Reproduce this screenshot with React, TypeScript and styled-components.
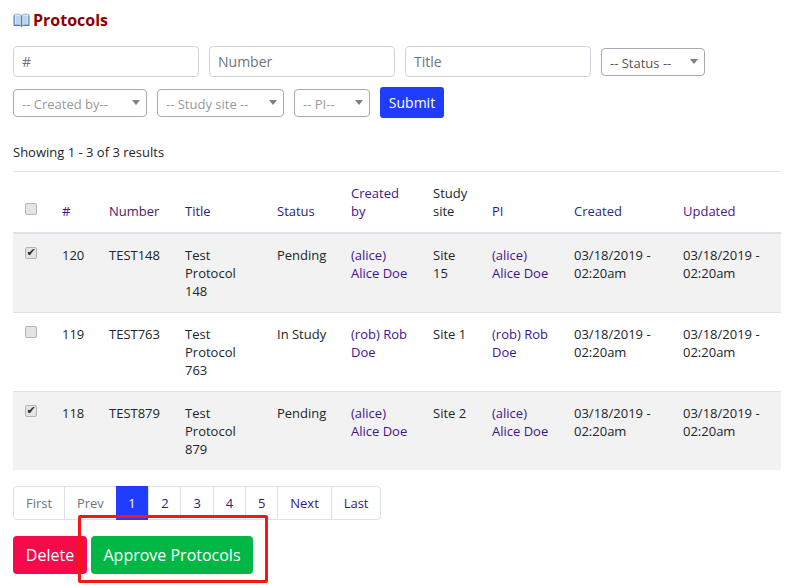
import styled, { createGlobalStyle } from 'styled-components';

const GlobalStyle = createGlobalStyle`
  html, body {
    margin: 0;
    padding: 0;
    background: #ffffff;
  }
  body {
    font-family: 'Open Sans', 'Liberation Sans', sans-serif;
    font-size: 13px;
    line-height: 18px;
    color: #212529;
  }
`;

const protocols = [
  { id: 120, number: 'TEST148', title: 'Test Protocol 148', status: 'Pending', by: '(alice) Alice Doe', site: 'Site 15', pi: '(alice) Alice Doe', checked: true },
  { id: 119, number: 'TEST763', title: 'Test Protocol 763', status: 'In Study', by: '(rob) Rob Doe', site: 'Site 1', pi: '(rob) Rob Doe', checked: false },
  { id: 118, number: 'TEST879', title: 'Test Protocol 879', status: 'Pending', by: '(alice) Alice Doe', site: 'Site 2', pi: '(alice) Alice Doe', checked: true },
];

const columns = [37, 47, 76, 92, 74, 82, 59, 82, 109, 110];

function BookIcon() {
  return (
    <svg width="17" height="15" viewBox="0 0 17 15">
      <path d="M0.5 2.5 L0.5 13 L7.5 13 L8.5 14.5 L9.5 13 L16.5 13 L16.5 2.5 Z" fill="#3f7fc4" />
      <path d="M1.5 1.5 C4 0.8 6.5 1 8 2 L8 12.5 C6.5 11.6 4 11.5 1.5 12 Z" fill="#dbe9f6" stroke="#5b93cf" strokeWidth="0.6" />
      <path d="M15.5 1.5 C13 0.8 10.5 1 9 2 L9 12.5 C10.5 11.6 13 11.5 15.5 12 Z" fill="#dbe9f6" stroke="#5b93cf" strokeWidth="0.6" />
      <path d="M3 4 L6.8 4 M3 6 L6.8 6 M3 8 L6.8 8 M3 10 L6.8 10 M10.2 4 L14 4 M10.2 6 L14 6 M10.2 8 L14 8 M10.2 10 L14 10" stroke="#8fb4da" strokeWidth="0.8" />
    </svg>
  );
}

function App() {
  return (
    <Page>
      <GlobalStyle />
      <Heading>
        <BookIcon />
        Protocols
      </Heading>

      <FilterRow>
        <TextInput placeholder="#" />
        <TextInput placeholder="Number" />
        <TextInput placeholder="Title" />
        <SelectBox $width={104} $dark>-- Status --</SelectBox>
      </FilterRow>
      <FilterRow $second>
        <SelectBox $width={134}>-- Created by--</SelectBox>
        <SelectBox $width={127}>-- Study site --</SelectBox>
        <SelectBox $width={76}>-- PI--</SelectBox>
        <SubmitButton>Submit</SubmitButton>
      </FilterRow>

      <ResultCount>Showing 1 - 3 of 3 results</ResultCount>

      <Table>
        <colgroup>
          {columns.map((width, i) => (
            <col key={i} style={{ width }} />
          ))}
        </colgroup>
        <thead>
          <tr>
            <HeadCell><Check /></HeadCell>
            <HeadCell $color="#42148c">#</HeadCell>
            <HeadCell $color="#521470">Number</HeadCell>
            <HeadCell $color="#32168a">Title</HeadCell>
            <HeadCell $color="#32168a">Status</HeadCell>
            <HeadCell $color="#42148c">Created by</HeadCell>
            <HeadCell>Study site</HeadCell>
            <HeadCell $color="#32168e">PI</HeadCell>
            <HeadCell $color="#2a2a8e">Created</HeadCell>
            <HeadCell $color="#521488">Updated</HeadCell>
          </tr>
        </thead>
        <tbody>
          {protocols.map((p) => (
            <Row key={p.id}>
              <Cell><Check defaultChecked={p.checked} /></Cell>
              <Cell>{p.id}</Cell>
              <Cell>{p.number}</Cell>
              <Cell>{p.title}</Cell>
              <Cell>{p.status}</Cell>
              <Cell $link>{p.by}</Cell>
              <Cell>{p.site}</Cell>
              <Cell $link>{p.pi}</Cell>
              <Cell>03/18/2019 - 02:20am</Cell>
              <Cell>03/18/2019 - 02:20am</Cell>
            </Row>
          ))}
        </tbody>
      </Table>

      <Pagination>
        <PageItem $disabled>First</PageItem>
        <PageItem $disabled>Prev</PageItem>
        <PageItem $active>1</PageItem>
        <PageItem>2</PageItem>
        <PageItem>3</PageItem>
        <PageItem>4</PageItem>
        <PageItem>5</PageItem>
        <PageItem>Next</PageItem>
        <PageItem>Last</PageItem>
      </Pagination>

      <Actions>
        <ActionButton $bg="#f70a4a" $width={74}>Delete</ActionButton>
        <ActionButton $bg="#00b746" $width={162}>Approve Protocols</ActionButton>
        <Highlight />
      </Actions>
    </Page>
  );
}

export default App;

const Page = styled.div`
  width: 768px;
  height: 586px;
  padding: 10px 9px 0 13px;
  overflow: hidden;
`;

const Heading = styled.h1`
  display: flex;
  align-items: center;
  gap: 3px;
  margin: 0 0 16px;
  font-size: 16px;
  line-height: 20px;
  font-weight: 700;
  color: #8b0000;
`;

const FilterRow = styled.div<{ $second?: boolean }>`
  display: flex;
  align-items: center;
  gap: 10px;
  margin-top: ${(p) => (p.$second ? '10px' : '0')};
`;

const TextInput = styled.input`
  box-sizing: border-box;
  width: 186px;
  height: 31px;
  padding: 0 8px;
  border: 1px solid #ced4da;
  border-radius: 4px;
  font-family: inherit;
  font-size: 14px;
  color: #495057;
  &::placeholder {
    color: #6c757d;
    opacity: 1;
  }
`;

const SelectBox = styled.div<{ $width: number; $dark?: boolean }>`
  position: relative;
  box-sizing: border-box;
  width: ${(p) => p.$width}px;
  height: 28px;
  padding: 0 8px;
  border: 1px solid #a9a9a9;
  border-radius: 4px;
  font-size: 13px;
  line-height: 28px;
  color: ${(p) => (p.$dark ? '#555555' : '#999999')};
  &::after {
    content: '';
    position: absolute;
    right: 6px;
    top: 10px;
    border-left: 4px solid transparent;
    border-right: 4px solid transparent;
    border-top: 5px solid #808080;
  }
`;

const SubmitButton = styled.button`
  width: 64px;
  height: 31px;
  padding: 0;
  border: 0;
  border-radius: 3px;
  background: #1f3cff;
  color: #ffffff;
  font-family: inherit;
  font-size: 14px;
`;

const ResultCount = styled.div`
  margin-top: 25px;
`;

const Table = styled.table`
  width: 768px;
  margin-top: 10px;
  border-collapse: collapse;
  table-layout: fixed;
`;

const HeadCell = styled.th<{ $color?: string }>`
  padding: 12px;
  border-top: 1px solid #dee2e6;
  border-bottom: 2px solid #dee2e6;
  font-weight: 400;
  text-align: left;
  vertical-align: bottom;
  color: ${(p) => p.$color ?? '#212529'};
`;

const Row = styled.tr`
  &:nth-child(odd) {
    background: #f2f2f2;
  }
`;

const Cell = styled.td<{ $link?: boolean }>`
  padding: 12px;
  border-top: 1px solid #dee2e6;
  vertical-align: top;
  color: ${(p) => (p.$link ? '#42148c' : '#212529')};
`;

const Check = styled.input.attrs({ type: 'checkbox' })`
  appearance: none;
  position: relative;
  box-sizing: border-box;
  display: block;
  width: 12px;
  height: 12px;
  margin: 1px 0 5px;
  border: 1px solid #b4b4b4;
  border-radius: 2px;
  background: #e4e4e4;
  &:checked::after {
    content: '✔';
    position: absolute;
    left: 0;
    top: 0;
    width: 10px;
    height: 10px;
    font-family: 'DejaVu Sans', sans-serif;
    font-size: 11px;
    line-height: 10px;
    text-align: center;
    color: #2c2c2c;
  }
`;

const Pagination = styled.div`
  display: inline-flex;
  height: 34px;
  margin-top: 16px;
  box-sizing: border-box;
  border: 1px solid #dee2e6;
  border-radius: 4px;
`;

const PageItem = styled.a<{ $active?: boolean; $disabled?: boolean }>`
  padding: 0 ${(p) => (p.$active ? '12.5px' : '11.93px')};
  margin: ${(p) => (p.$active ? '-1px 0' : '0')};
  line-height: ${(p) => (p.$active ? '34px' : '32px')};
  border-left: ${(p) => (p.$active ? '0' : '1px solid #dee2e6')};
  background: ${(p) => (p.$active ? '#1f3cff' : 'transparent')};
  color: ${(p) => (p.$active ? '#ffffff' : p.$disabled ? '#6c757d' : '#32168a')};
  &:first-child {
    border-left: 0;
  }
`;

const Actions = styled.div`
  position: relative;
  display: flex;
  gap: 4px;
  margin-top: 16px;
`;

const ActionButton = styled.button<{ $bg: string; $width: number }>`
  width: ${(p) => p.$width}px;
  height: 38px;
  padding: 0;
  border: 0;
  border-radius: 4px;
  background: ${(p) => p.$bg};
  color: #ffffff;
  font-family: inherit;
  font-size: 16px;
`;

const Highlight = styled.div`
  position: absolute;
  left: 65px;
  top: -21px;
  width: 184px;
  height: 62px;
  border: 3px solid #fb1414;
  border-radius: 2px;
`;
